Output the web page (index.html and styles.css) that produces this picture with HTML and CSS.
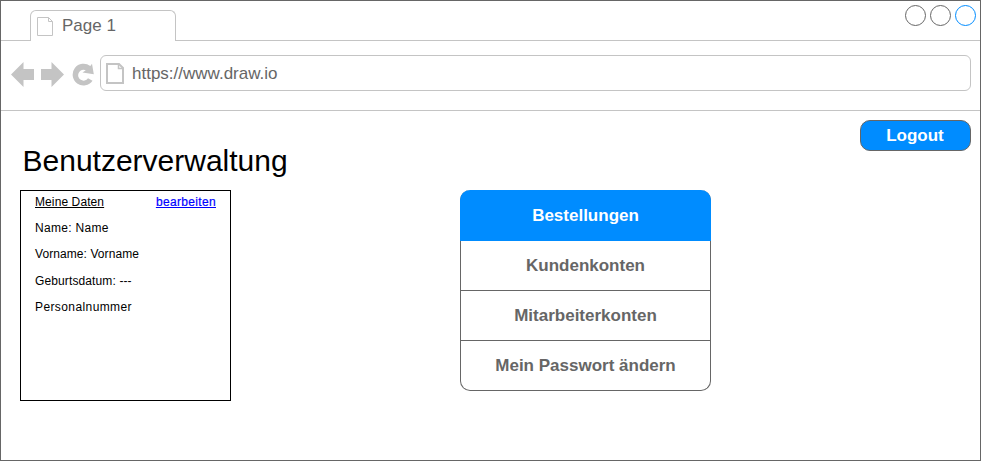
FILE: index.html
```html
<!DOCTYPE html>
<html lang="de">
<head>
<meta charset="utf-8">
<title>Benutzerverwaltung</title>
<link rel="stylesheet" href="styles.css">
</head>
<body>
<div class="browser">
  <header class="tabstrip">
    <div class="strip-start"></div>
    <div class="tab">
      <svg class="tab-icon" width="16" height="19" viewBox="0 0 16 19"><path d="M.5.5h11l4 4v14H.5zM11.500.5v4h4"/></svg>
      <span>Page 1</span>
    </div>
    <div class="strip-end">
      <i class="dot"></i><i class="dot"></i><i class="dot dot-active"></i>
    </div>
  </header>
  <nav class="toolbar">
    <svg class="nav-icons" width="84" height="26" viewBox="0 0 84 26">
      <path d="M0 12.500L12.500 0v7H23v11H12.500v7z"/>
      <path d="M53 12.500L40.500 0v7H30v11h10.500v7z"/>
      <path d="M79.300 4L81 1.800L82.800 12.200L71.500 10.600L74.800 8.300A5.400 5.400 0 1 0 77 16.300L81.500 18.800A10.900 10.900 0 1 1 79.300 4z"/>
    </svg>
    <div class="address">
      <svg class="page-icon" width="18" height="21" viewBox="0 0 18 21"><path d="M1 1h12l4 4V20H1z"/><path class="fold" d="M12.500 1v4.500H17"/></svg>
      <span class="url">https://www.draw.io</span>
    </div>
  </nav>
  <main class="content">
    <div class="top"><button class="logout">Logout</button></div>
    <h1>Benutzerverwaltung</h1>
    <div class="columns">
      <section class="card">
        <div class="card-head"><span class="title">Meine Daten</span><a class="edit">bearbeiten</a></div>
        <p class="name">Name: Name</p>
        <p class="forename">Vorname: Vorname</p>
        <p class="birth">Geburtsdatum: ---</p>
        <p class="number">Personalnummer</p>
      </section>
      <ul class="menu">
        <li class="active">Bestellungen</li>
        <li>Kundenkonten</li>
        <li>Mitarbeiterkonten</li>
        <li>Mein Passwort ändern</li>
      </ul>
    </div>
  </main>
</div>
</body>
</html>
```
FILE: styles.css
```css
* { box-sizing: border-box; }
body {
  margin: 0;
  background: #fff;
  color: #666;
  font: 17px "Liberation Sans", Arial, sans-serif;
}
.browser {
  width: 981px;
  height: 461px;
  border: 1px solid #666;
  overflow: hidden;
}
.tabstrip { display: flex; height: 40px; }
.strip-start { width: 29px; border-bottom: 1px solid #c4c4c4; }
.tab {
  display: flex;
  align-items: center;
  gap: 9px;
  width: 146px;
  height: 31px;
  margin-top: 9px;
  padding-left: 6px;
  border: 1px solid #c4c4c4;
  border-bottom: 0;
  border-radius: 6px 6px 0 0;
}
.tab-icon { fill: none; stroke: #c4c4c4; }
.strip-end {
  flex: 1;
  display: flex;
  justify-content: flex-end;
  gap: 4px;
  padding: 4px 4px 0 0;
  border-bottom: 1px solid #c4c4c4;
}
.dot {
  width: 21px;
  height: 21px;
  border: 1px solid #666;
  border-radius: 50%;
}
.dot-active { border-color: #008cff; }
.toolbar {
  display: flex;
  height: 70px;
  padding: 14px 9px 0 10px;
  border-bottom: 1px solid #c4c4c4;
}
.nav-icons { margin: 7px 5px 0 0; fill: #c4c4c4; }
.address {
  flex: 1;
  display: flex;
  align-items: center;
  gap: 8px;
  height: 36px;
  padding-left: 5px;
  border: 1px solid #c4c4c4;
  border-radius: 6px;
}
.url { padding-top: 2px; }
.page-icon { fill: none; stroke: #c4c4c4; stroke-width: 2; }
.page-icon .fold { stroke-width: 1.500; }
.content { padding: 9px 9px 0 19px; }
.top { display: flex; justify-content: flex-end; }
.logout {
  width: 111px;
  height: 31px;
  padding: 0 1px 0 0;
  border: 1px solid #666;
  border-radius: 10px;
  background: #008cff;
  color: #fff;
  font: bold 17px "Liberation Sans", Arial, sans-serif;
}
h1 {
  margin: -8px 0 11px 2.500px;
  color: #000;
  font-size: 30px;
  font-weight: 400;
  line-height: 36px;
}
.columns { display: flex; gap: 229px; }
.card {
  width: 211px;
  height: 211px;
  padding: 4px 14px;
  border: 1px solid #000;
  color: #000;
  font-size: 12px;
  line-height: 14px;
}
.card-head { display: flex; justify-content: space-between; }
.title { text-decoration: underline; letter-spacing: .1px; }
.edit { color: #00f; text-decoration: underline; letter-spacing: .34px; -webkit-text-stroke: .2px #00f; }
.card p { margin: 12.200px 0 0; }
.card .name { letter-spacing: .3px; }
.card .forename { letter-spacing: .08px; }
.card .birth { letter-spacing: .12px; }
.card .number { letter-spacing: .4px; }
.menu {
  width: 251px;
  height: 201px;
  margin: 0;
  padding: 0;
  border: 1px solid #666;
  border-top: 0;
  border-radius: 10px;
  list-style: none;
  font-weight: 700;
}
.menu li {
  height: 50px;
  border-bottom: 1px solid #666;
  line-height: 50px;
  text-align: center;
}
.menu li:last-child { border-bottom: 0; }
.menu .active {
  height: 51px;
  margin: 0 -1px;
  border-bottom: 0;
  border-radius: 10px 10px 0 0;
  background: #008cff;
  color: #fff;
  line-height: 52px;
}
```
